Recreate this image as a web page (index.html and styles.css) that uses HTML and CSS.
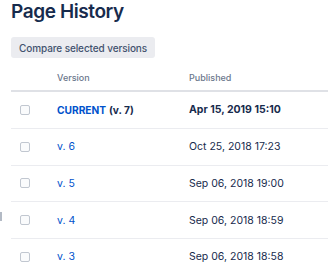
FILE: index.html
```html
<!DOCTYPE html>
<html>
<head>
<meta charset="utf-8">
<link rel="stylesheet" href="styles.css">
</head>
<body>
<div class="page">
  <h1 class="title">Page History</h1>
  <button class="compare">Compare selected versions</button>
  <table class="history">
    <thead>
      <tr>
        <th class="c-check"></th>
        <th class="c-version">Version</th>
        <th class="c-date">Published</th>
      </tr>
    </thead>
    <tbody>
      <tr>
        <td class="c-check"><span class="box"></span></td>
        <td class="c-version current"><a class="link strong">CURRENT</a> <span class="strong">(v. 7)</span></td>
        <td class="c-date strong">Apr 15, 2019 15:10</td>
      </tr>
      <tr>
        <td class="c-check"><span class="box"></span></td>
        <td class="c-version"><a class="link">v. 6</a></td>
        <td class="c-date">Oct 25, 2018 17:23</td>
      </tr>
      <tr>
        <td class="c-check"><span class="box"></span></td>
        <td class="c-version"><a class="link">v. 5</a></td>
        <td class="c-date">Sep 06, 2018 19:00</td>
      </tr>
      <tr>
        <td class="c-check"><span class="box"></span></td>
        <td class="c-version"><a class="link">v. 4</a></td>
        <td class="c-date">Sep 06, 2018 18:59</td>
      </tr>
      <tr>
        <td class="c-check"><span class="box"></span></td>
        <td class="c-version"><a class="link">v. 3</a></td>
        <td class="c-date">Sep 06, 2018 18:58</td>
      </tr>
    </tbody>
  </table>
  <span class="edge-mark"></span>
</div>
</body>
</html>
```
FILE: styles.css
```css
html, body {
  margin: 0;
  padding: 0;
  background: #ffffff;
}
body {
  font-family: Inter, "Liberation Sans", sans-serif;
  color: #172B4D;
  overflow: hidden;
}
.page {
  position: relative;
  padding: 0 0 0 11px;
}
.title {
  margin: 0;
  padding-top: 0;
  font-size: 19px;
  line-height: 24px;
  font-weight: 600;
  letter-spacing: -0.4px;
  color: #172B4D;
}
.compare {
  display: block;
  margin-top: 13px;
  height: 21px;
  padding: 0 8px;
  border: none;
  border-radius: 3px;
  background: #EBECF0;
  color: #42526E;
  font-family: inherit;
  font-size: 10px;
  font-weight: 500;
  letter-spacing: -0.1px;
}
.history {
  margin-top: 6px;
  width: 317px;
  border-collapse: collapse;
  font-size: 10.5px;
}
.history th {
  height: 26px;
  padding: 0;
  text-align: left;
  font-weight: 500;
  font-size: 9px;
  color: #6B778C;
  border-bottom: 2px solid #DFE1E6;
}
.history td {
  height: 35.75px;
  padding: 0;
  border-bottom: 1px solid #EBECF0;
  vertical-align: middle;
}
.c-check {
  width: 46px;
}
.c-version {
  width: 132px;
}
.current {
  font-size: 10.2px;
}
.box {
  display: block;
  margin-left: 9px;
  width: 8px;
  height: 8px;
  border: 1px solid #C1C7D0;
  border-radius: 2px;
  background: #FAFBFC;
}
.link {
  color: #0052CC;
  text-decoration: none;
}
.strong {
  font-weight: 700;
}
.edge-mark {
  position: absolute;
  left: 0;
  top: 212px;
  width: 2px;
  height: 9px;
  background: #B3BAC5;
}
```
